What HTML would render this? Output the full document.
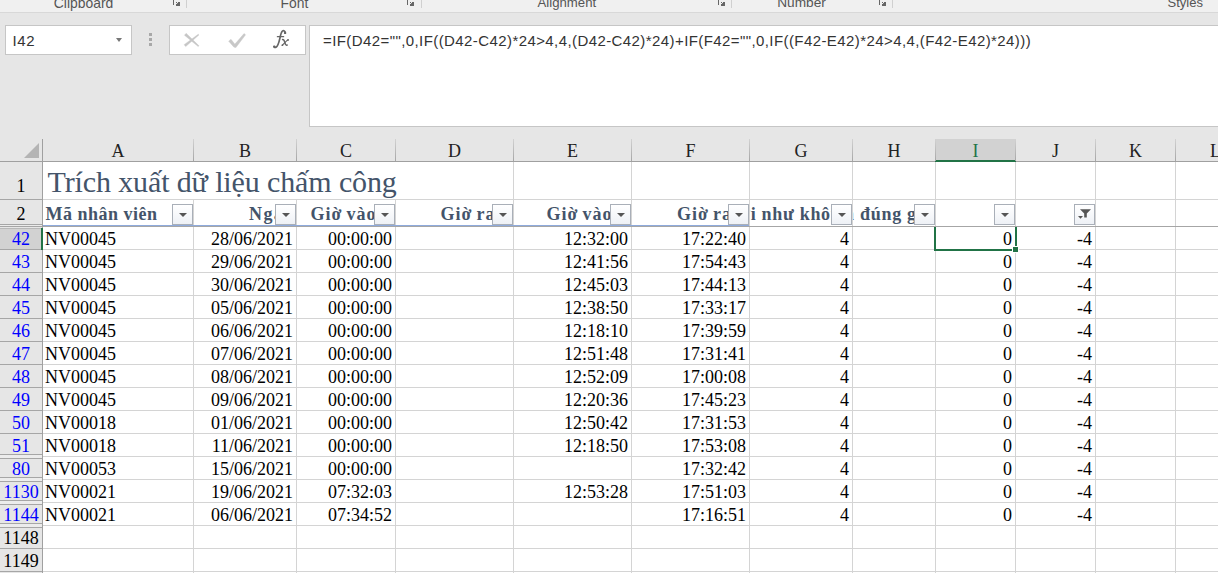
<!DOCTYPE html>
<html><head><meta charset="utf-8">
<style>
*{margin:0;padding:0;box-sizing:border-box}
html,body{width:1218px;height:573px;overflow:hidden;background:#e6e6e6}
.a{position:absolute}
.ui{font-family:"Liberation Sans",sans-serif}
.sr{font-family:"Liberation Serif",serif}
.t{position:absolute;white-space:nowrap;font-family:"Liberation Serif",serif;font-size:18px;line-height:22px;color:#000}
.r{text-align:right}
.clip{position:absolute;overflow:hidden;white-space:nowrap}
.btn{position:absolute;width:21px;height:21px;border:1px solid #a9afb8;background:linear-gradient(#ffffff,#eef1f6)}
.btn i{position:absolute;left:6px;top:8px;width:0;height:0;border-left:4px solid transparent;border-right:4px solid transparent;border-top:4px solid #555}
</style></head><body>

<div class="a" style="left:0;top:0;width:1218px;height:12px;background:#f0f0f0"></div>
<div class="a" style="left:0;top:12px;width:1218px;height:1px;background:#d8d8d8"></div>
<div class="a ui" style="left:53.8px;top:-7px;font-size:13.9px;line-height:20px;color:#555;white-space:nowrap">Clipboard</div>
<div class="a ui" style="left:280.5px;top:-7px;font-size:13.9px;line-height:20px;color:#555;white-space:nowrap">Font</div>
<div class="a ui" style="left:537.5px;top:-7px;font-size:13.2px;line-height:20px;color:#555;white-space:nowrap">Alignment</div>
<div class="a ui" style="left:777.2px;top:-7px;font-size:13.7px;line-height:20px;color:#555;white-space:nowrap">Number</div>
<div class="a ui" style="left:1167.5px;top:-7px;font-size:13.0px;line-height:20px;color:#555;white-space:nowrap">Styles</div>
<div class="a" style="left:173px;top:0;width:1px;height:5px;background:#666"></div>
<svg class="a" style="left:176px;top:2px" width="4" height="4" viewBox="0 0 4 4"><path d="M0 0H1V1H0Z M2 0H4V4H0V2H2Z" fill="#666"/><path d="M1 1H2V2H1Z" fill="#777"/></svg>
<div class="a" style="left:407px;top:0;width:1px;height:5px;background:#666"></div>
<svg class="a" style="left:410px;top:2px" width="4" height="4" viewBox="0 0 4 4"><path d="M0 0H1V1H0Z M2 0H4V4H0V2H2Z" fill="#666"/><path d="M1 1H2V2H1Z" fill="#777"/></svg>
<div class="a" style="left:718px;top:0;width:1px;height:5px;background:#666"></div>
<svg class="a" style="left:721px;top:2px" width="4" height="4" viewBox="0 0 4 4"><path d="M0 0H1V1H0Z M2 0H4V4H0V2H2Z" fill="#666"/><path d="M1 1H2V2H1Z" fill="#777"/></svg>
<div class="a" style="left:879px;top:0;width:1px;height:5px;background:#666"></div>
<svg class="a" style="left:882px;top:2px" width="4" height="4" viewBox="0 0 4 4"><path d="M0 0H1V1H0Z M2 0H4V4H0V2H2Z" fill="#666"/><path d="M1 1H2V2H1Z" fill="#777"/></svg>
<div class="a" style="left:186px;top:0;width:1px;height:8px;background:#d0d0d0"></div>
<div class="a" style="left:421px;top:0;width:1px;height:8px;background:#d0d0d0"></div>
<div class="a" style="left:731px;top:0;width:1px;height:8px;background:#d0d0d0"></div>
<div class="a" style="left:892px;top:0;width:1px;height:8px;background:#d0d0d0"></div>
<div class="a" style="left:5px;top:25px;width:127px;height:30px;background:#fff;border:1px solid #c6c6c6"></div>
<div class="a ui" style="left:12.5px;top:30.5px;font-size:15px;line-height:20px;letter-spacing:0.6px;color:#333">I42</div>
<div class="a" style="left:115.5px;top:38px;width:0;height:0;border-left:3.75px solid transparent;border-right:3.75px solid transparent;border-top:4px solid #777"></div>
<div class="a" style="left:149px;top:33px;width:3px;height:3px;background:#a8a8a8"></div>
<div class="a" style="left:149px;top:38px;width:3px;height:3px;background:#a8a8a8"></div>
<div class="a" style="left:149px;top:43px;width:3px;height:3px;background:#a8a8a8"></div>
<div class="a" style="left:169px;top:25px;width:137px;height:30px;background:#fff;border:1px solid #c6c6c6"></div>
<svg class="a" style="left:183px;top:32px" width="17" height="16" viewBox="0 0 17 16"><path d="M1.47 3.23 L15.23 14.61 L15.97 13.79 L3.13 1.37Z M2.68 14.57 L15.91 2.99 L15.29 2.21 L1.12 12.63Z" fill="#c6c6c6" stroke="#c6c6c6" stroke-width="0.4" stroke-linejoin="round"/></svg>
<svg class="a" style="left:226px;top:31px" width="22" height="18" viewBox="0 0 22 18"><path d="M2.65 10.17 L8.21 16.44 L10.19 14.76 L4.95 8.23Z M9.77 16.74 L19.58 3.83 L18.02 2.57 L7.43 14.86Z" fill="#c8c8c8" stroke="#c8c8c8" stroke-width="0.4" stroke-linejoin="round"/></svg>
<svg class="a" style="left:265px;top:26px" width="32" height="26" viewBox="0 0 32 26"><g fill="none" stroke="#666" stroke-linecap="round"><path d="M20.2 6.6C20.2 5 18.6 4.2 17.4 5.1C16.1 6.1 15.6 9 14.8 12.6C13.9 16.6 13 20.2 11 21.2C10 21.7 9.2 21.3 9.1 20.6" stroke-width="1.7"/><path d="M12.4 10.7H18.6" stroke-width="1.3"/><path d="M17.6 13.6C18.8 13.4 19.3 14.6 19.8 16.4C20.3 18.3 20.8 19.6 22.2 19" stroke-width="1.5"/><path d="M22.8 13.9C21.5 14.5 19 17.5 17.3 19.4" stroke-width="1.1"/></g><g fill="#666"><circle cx="20.1" cy="6.9" r="1.2"/><circle cx="9.3" cy="20.6" r="1.2"/><circle cx="23.1" cy="13.9" r="0.9"/><circle cx="17.4" cy="19.2" r="0.9"/></g></svg>
<div class="a" style="left:309px;top:25px;width:920px;height:102px;background:#fff;border:1px solid #c6c6c6"></div>
<div class="a ui" style="left:323px;top:31px;font-size:15px;line-height:20px;letter-spacing:0.415px;color:#333;white-space:nowrap">=IF(D42=&quot;&quot;,0,IF((D42-C42)*24&gt;4,4,(D42-C42)*24)+IF(F42=&quot;&quot;,0,IF((F42-E42)*24&gt;4,4,(F42-E42)*24)))</div>
<div class="a" style="left:43px;top:162px;width:1175px;height:411px;background:#fff"></div>
<div class="a" style="left:935px;top:139px;width:81px;height:21px;background:#d2d2d2"></div>
<div class="a" style="left:935px;top:160px;width:81px;height:2px;background:#217346"></div>
<div class="a" style="left:0;top:161px;width:935px;height:1px;background:#a0a0a0"></div>
<div class="a" style="left:1016px;top:161px;width:202px;height:1px;background:#a0a0a0"></div>
<div class="a" style="left:42px;top:139px;width:1px;height:434px;background:#a0a0a0"></div>
<svg class="a" style="left:24px;top:143px" width="16" height="16" viewBox="0 0 16 16"><path d="M15 0V15H0Z" fill="#b4b4b4"/></svg>
<div class="t" style="left:43px;top:140px;width:150px;text-align:center;color:#222">A</div>
<div class="t" style="left:194px;top:140px;width:102px;text-align:center;color:#222">B</div>
<div class="t" style="left:297px;top:140px;width:98px;text-align:center;color:#222">C</div>
<div class="t" style="left:396px;top:140px;width:117px;text-align:center;color:#222">D</div>
<div class="t" style="left:514px;top:140px;width:117px;text-align:center;color:#222">E</div>
<div class="t" style="left:632px;top:140px;width:117px;text-align:center;color:#222">F</div>
<div class="t" style="left:750px;top:140px;width:102px;text-align:center;color:#222">G</div>
<div class="t" style="left:853px;top:140px;width:82px;text-align:center;color:#222">H</div>
<div class="t" style="left:936px;top:140px;width:79px;text-align:center;color:#217346">I</div>
<div class="t" style="left:1016px;top:140px;width:79px;text-align:center;color:#222">J</div>
<div class="t" style="left:1096px;top:140px;width:79px;text-align:center;color:#222">K</div>
<div class="t" style="left:1176px;top:140px;width:79px;text-align:center;color:#222">L</div>
<div class="a" style="left:193px;top:139px;width:1px;height:22px;background:linear-gradient(#d2d2d2,#a6a6a6)"></div>
<div class="a" style="left:296px;top:139px;width:1px;height:22px;background:linear-gradient(#d2d2d2,#a6a6a6)"></div>
<div class="a" style="left:395px;top:139px;width:1px;height:22px;background:linear-gradient(#d2d2d2,#a6a6a6)"></div>
<div class="a" style="left:513px;top:139px;width:1px;height:22px;background:linear-gradient(#d2d2d2,#a6a6a6)"></div>
<div class="a" style="left:631px;top:139px;width:1px;height:22px;background:linear-gradient(#d2d2d2,#a6a6a6)"></div>
<div class="a" style="left:749px;top:139px;width:1px;height:22px;background:linear-gradient(#d2d2d2,#a6a6a6)"></div>
<div class="a" style="left:852px;top:139px;width:1px;height:22px;background:linear-gradient(#d2d2d2,#a6a6a6)"></div>
<div class="a" style="left:935px;top:139px;width:1px;height:22px;background:linear-gradient(#d2d2d2,#a6a6a6)"></div>
<div class="a" style="left:1015px;top:139px;width:1px;height:22px;background:linear-gradient(#d2d2d2,#a6a6a6)"></div>
<div class="a" style="left:1095px;top:139px;width:1px;height:22px;background:linear-gradient(#d2d2d2,#a6a6a6)"></div>
<div class="a" style="left:1175px;top:139px;width:1px;height:22px;background:linear-gradient(#d2d2d2,#a6a6a6)"></div>
<div class="a" style="left:193px;top:162px;width:1px;height:411px;background:#d4d4d4"></div>
<div class="a" style="left:296px;top:162px;width:1px;height:411px;background:#d4d4d4"></div>
<div class="a" style="left:395px;top:162px;width:1px;height:411px;background:#d4d4d4"></div>
<div class="a" style="left:513px;top:162px;width:1px;height:411px;background:#d4d4d4"></div>
<div class="a" style="left:631px;top:162px;width:1px;height:411px;background:#d4d4d4"></div>
<div class="a" style="left:749px;top:162px;width:1px;height:411px;background:#d4d4d4"></div>
<div class="a" style="left:852px;top:162px;width:1px;height:411px;background:#d4d4d4"></div>
<div class="a" style="left:935px;top:162px;width:1px;height:411px;background:#d4d4d4"></div>
<div class="a" style="left:1015px;top:162px;width:1px;height:411px;background:#d4d4d4"></div>
<div class="a" style="left:1095px;top:162px;width:1px;height:411px;background:#d4d4d4"></div>
<div class="a" style="left:1175px;top:162px;width:1px;height:411px;background:#d4d4d4"></div>
<div class="a" style="left:43px;top:199px;width:1175px;height:1px;background:#d4d4d4"></div>
<div class="a" style="left:43px;top:249px;width:1175px;height:1px;background:#d4d4d4"></div>
<div class="a" style="left:43px;top:272px;width:1175px;height:1px;background:#d4d4d4"></div>
<div class="a" style="left:43px;top:295px;width:1175px;height:1px;background:#d4d4d4"></div>
<div class="a" style="left:43px;top:318px;width:1175px;height:1px;background:#d4d4d4"></div>
<div class="a" style="left:43px;top:341px;width:1175px;height:1px;background:#d4d4d4"></div>
<div class="a" style="left:43px;top:364px;width:1175px;height:1px;background:#d4d4d4"></div>
<div class="a" style="left:43px;top:387px;width:1175px;height:1px;background:#d4d4d4"></div>
<div class="a" style="left:43px;top:410px;width:1175px;height:1px;background:#d4d4d4"></div>
<div class="a" style="left:43px;top:433px;width:1175px;height:1px;background:#d4d4d4"></div>
<div class="a" style="left:43px;top:456px;width:1175px;height:1px;background:#d4d4d4"></div>
<div class="a" style="left:43px;top:479px;width:1175px;height:1px;background:#d4d4d4"></div>
<div class="a" style="left:43px;top:502px;width:1175px;height:1px;background:#d4d4d4"></div>
<div class="a" style="left:43px;top:525px;width:1175px;height:1px;background:#d4d4d4"></div>
<div class="a" style="left:43px;top:548px;width:1175px;height:1px;background:#d4d4d4"></div>
<div class="a" style="left:43px;top:571px;width:1175px;height:1px;background:#d4d4d4"></div>
<div class="a" style="left:43px;top:162px;width:470px;height:37px;background:#fff"></div>
<div class="t" style="transform:none;left:47.5px;top:166.5px;font-size:30px;line-height:30px;letter-spacing:-0.12px;color:#44546a">Trích xuất dữ liệu chấm công</div>
<div class="a" style="left:43px;top:225px;width:706px;height:1px;background:#8eaadc"></div>
<div class="a" style="left:43px;top:226px;width:1175px;height:1px;background:#a6a6a6"></div>
<div class="clip" style="left:43px;top:200px;width:129px;height:24px"><div class="t" style="left:2.5px;top:3px;font-weight:700;letter-spacing:0.5px;word-spacing:0px;color:#44546a">Mã nhân viên</div></div>
<div class="clip" style="left:194px;top:200px;width:81px;height:24px"><div class="t" style="left:55px;top:3px;font-weight:700;letter-spacing:1.4px;word-spacing:0px;color:#44546a">Ngày</div></div>
<div class="clip" style="left:297px;top:200px;width:77px;height:24px"><div class="t" style="left:13.5px;top:3px;font-weight:700;letter-spacing:1.0px;word-spacing:-1.5px;color:#44546a">Giờ vào</div></div>
<div class="clip" style="left:396px;top:200px;width:96px;height:24px"><div class="t" style="left:44.5px;top:3px;font-weight:700;letter-spacing:1.0px;word-spacing:-1.5px;color:#44546a">Giờ ra</div></div>
<div class="clip" style="left:514px;top:200px;width:96px;height:24px"><div class="t" style="left:32.5px;top:3px;font-weight:700;letter-spacing:1.0px;word-spacing:-1.5px;color:#44546a">Giờ vào</div></div>
<div class="clip" style="left:632px;top:200px;width:96px;height:24px"><div class="t" style="left:45px;top:3px;font-weight:700;letter-spacing:1.0px;word-spacing:-1.5px;color:#44546a">Giờ ra</div></div>
<div class="clip" style="left:750px;top:200px;width:81px;height:24px"><div class="t" style="left:-10px;top:3px;font-weight:700;letter-spacing:0.7px;word-spacing:0px;color:#44546a">ời như không</div></div>
<div class="clip" style="left:853px;top:200px;width:61px;height:24px"><div class="t" style="left:-8px;top:3px;font-weight:700;letter-spacing:0.7px;word-spacing:0px;color:#44546a">a</div></div>
<div class="clip" style="left:853px;top:200px;width:61px;height:24px"><div class="t" style="left:7px;top:3px;font-weight:700;letter-spacing:0.7px;word-spacing:0px;color:#44546a">đúng giờ</div></div>
<div class="btn" style="left:172px;top:204px"><i></i></div>
<div class="btn" style="left:275px;top:204px"><i></i></div>
<div class="btn" style="left:374px;top:204px"><i></i></div>
<div class="btn" style="left:492px;top:204px"><i></i></div>
<div class="btn" style="left:610px;top:204px"><i></i></div>
<div class="btn" style="left:728px;top:204px"><i></i></div>
<div class="btn" style="left:831px;top:204px"><i></i></div>
<div class="btn" style="left:914px;top:204px"><i></i></div>
<div class="btn" style="left:994px;top:204px"><i></i></div>
<div class="btn" style="left:1074px;top:204px"><svg class="a" style="left:3px;top:4px" width="14" height="12" viewBox="0 0 14 12"><path d="M2 0.3H13L8.8 4.5V8.6H6.2V4.5Z" fill="#555"/><path d="M0 7H5L2.5 9.8Z" fill="#555"/></svg></div>
<div class="t" style="left:0;top:175px;width:42px;text-align:center">1</div>
<div class="a" style="left:0;top:199px;width:42px;height:1px;background:#a6a6a6"></div>
<div class="t" style="left:0;top:203px;width:42px;text-align:center">2</div>
<div class="a" style="left:0;top:225px;width:42px;height:1px;background:#ececec"></div>
<div class="a" style="left:0;top:224px;width:42px;height:1px;background:#a6a6a6"></div>
<div class="a" style="left:0;top:226px;width:42px;height:1px;background:#a6a6a6"></div>
<div class="a" style="left:0;top:228px;width:42px;height:21px;background:#d2d2d2"></div>
<div class="a" style="left:0;top:228px;width:42px;height:1px;background:#b8b8b8"></div>
<div class="t" style="left:0;top:228px;width:42px;text-align:center;color:#0000ff">42</div>
<div class="a" style="left:0;top:249px;width:42px;height:1px;background:#a6a6a6"></div>
<div class="t" style="left:45px;top:228px">NV00045</div>
<div class="t r" style="left:193px;top:228px;width:100px">28/06/2021</div>
<div class="t r" style="left:296px;top:228px;width:96px">00:00:00</div>
<div class="t r" style="left:513px;top:228px;width:115px">12:32:00</div>
<div class="t r" style="left:631px;top:228px;width:115px">17:22:40</div>
<div class="t r" style="left:749px;top:228px;width:100px">4</div>
<div class="t r" style="left:935px;top:228px;width:77px">0</div>
<div class="t r" style="left:1015px;top:228px;width:77px">-4</div>
<div class="t" style="left:0;top:251px;width:42px;text-align:center;color:#0000ff">43</div>
<div class="a" style="left:0;top:272px;width:42px;height:1px;background:#a6a6a6"></div>
<div class="t" style="left:45px;top:251px">NV00045</div>
<div class="t r" style="left:193px;top:251px;width:100px">29/06/2021</div>
<div class="t r" style="left:296px;top:251px;width:96px">00:00:00</div>
<div class="t r" style="left:513px;top:251px;width:115px">12:41:56</div>
<div class="t r" style="left:631px;top:251px;width:115px">17:54:43</div>
<div class="t r" style="left:749px;top:251px;width:100px">4</div>
<div class="t r" style="left:935px;top:251px;width:77px">0</div>
<div class="t r" style="left:1015px;top:251px;width:77px">-4</div>
<div class="t" style="left:0;top:274px;width:42px;text-align:center;color:#0000ff">44</div>
<div class="a" style="left:0;top:295px;width:42px;height:1px;background:#a6a6a6"></div>
<div class="t" style="left:45px;top:274px">NV00045</div>
<div class="t r" style="left:193px;top:274px;width:100px">30/06/2021</div>
<div class="t r" style="left:296px;top:274px;width:96px">00:00:00</div>
<div class="t r" style="left:513px;top:274px;width:115px">12:45:03</div>
<div class="t r" style="left:631px;top:274px;width:115px">17:44:13</div>
<div class="t r" style="left:749px;top:274px;width:100px">4</div>
<div class="t r" style="left:935px;top:274px;width:77px">0</div>
<div class="t r" style="left:1015px;top:274px;width:77px">-4</div>
<div class="t" style="left:0;top:297px;width:42px;text-align:center;color:#0000ff">45</div>
<div class="a" style="left:0;top:318px;width:42px;height:1px;background:#a6a6a6"></div>
<div class="t" style="left:45px;top:297px">NV00045</div>
<div class="t r" style="left:193px;top:297px;width:100px">05/06/2021</div>
<div class="t r" style="left:296px;top:297px;width:96px">00:00:00</div>
<div class="t r" style="left:513px;top:297px;width:115px">12:38:50</div>
<div class="t r" style="left:631px;top:297px;width:115px">17:33:17</div>
<div class="t r" style="left:749px;top:297px;width:100px">4</div>
<div class="t r" style="left:935px;top:297px;width:77px">0</div>
<div class="t r" style="left:1015px;top:297px;width:77px">-4</div>
<div class="t" style="left:0;top:320px;width:42px;text-align:center;color:#0000ff">46</div>
<div class="a" style="left:0;top:341px;width:42px;height:1px;background:#a6a6a6"></div>
<div class="t" style="left:45px;top:320px">NV00045</div>
<div class="t r" style="left:193px;top:320px;width:100px">06/06/2021</div>
<div class="t r" style="left:296px;top:320px;width:96px">00:00:00</div>
<div class="t r" style="left:513px;top:320px;width:115px">12:18:10</div>
<div class="t r" style="left:631px;top:320px;width:115px">17:39:59</div>
<div class="t r" style="left:749px;top:320px;width:100px">4</div>
<div class="t r" style="left:935px;top:320px;width:77px">0</div>
<div class="t r" style="left:1015px;top:320px;width:77px">-4</div>
<div class="t" style="left:0;top:343px;width:42px;text-align:center;color:#0000ff">47</div>
<div class="a" style="left:0;top:364px;width:42px;height:1px;background:#a6a6a6"></div>
<div class="t" style="left:45px;top:343px">NV00045</div>
<div class="t r" style="left:193px;top:343px;width:100px">07/06/2021</div>
<div class="t r" style="left:296px;top:343px;width:96px">00:00:00</div>
<div class="t r" style="left:513px;top:343px;width:115px">12:51:48</div>
<div class="t r" style="left:631px;top:343px;width:115px">17:31:41</div>
<div class="t r" style="left:749px;top:343px;width:100px">4</div>
<div class="t r" style="left:935px;top:343px;width:77px">0</div>
<div class="t r" style="left:1015px;top:343px;width:77px">-4</div>
<div class="t" style="left:0;top:366px;width:42px;text-align:center;color:#0000ff">48</div>
<div class="a" style="left:0;top:387px;width:42px;height:1px;background:#a6a6a6"></div>
<div class="t" style="left:45px;top:366px">NV00045</div>
<div class="t r" style="left:193px;top:366px;width:100px">08/06/2021</div>
<div class="t r" style="left:296px;top:366px;width:96px">00:00:00</div>
<div class="t r" style="left:513px;top:366px;width:115px">12:52:09</div>
<div class="t r" style="left:631px;top:366px;width:115px">17:00:08</div>
<div class="t r" style="left:749px;top:366px;width:100px">4</div>
<div class="t r" style="left:935px;top:366px;width:77px">0</div>
<div class="t r" style="left:1015px;top:366px;width:77px">-4</div>
<div class="t" style="left:0;top:389px;width:42px;text-align:center;color:#0000ff">49</div>
<div class="a" style="left:0;top:410px;width:42px;height:1px;background:#a6a6a6"></div>
<div class="t" style="left:45px;top:389px">NV00045</div>
<div class="t r" style="left:193px;top:389px;width:100px">09/06/2021</div>
<div class="t r" style="left:296px;top:389px;width:96px">00:00:00</div>
<div class="t r" style="left:513px;top:389px;width:115px">12:20:36</div>
<div class="t r" style="left:631px;top:389px;width:115px">17:45:23</div>
<div class="t r" style="left:749px;top:389px;width:100px">4</div>
<div class="t r" style="left:935px;top:389px;width:77px">0</div>
<div class="t r" style="left:1015px;top:389px;width:77px">-4</div>
<div class="t" style="left:0;top:412px;width:42px;text-align:center;color:#0000ff">50</div>
<div class="a" style="left:0;top:433px;width:42px;height:1px;background:#a6a6a6"></div>
<div class="t" style="left:45px;top:412px">NV00018</div>
<div class="t r" style="left:193px;top:412px;width:100px">01/06/2021</div>
<div class="t r" style="left:296px;top:412px;width:96px">00:00:00</div>
<div class="t r" style="left:513px;top:412px;width:115px">12:50:42</div>
<div class="t r" style="left:631px;top:412px;width:115px">17:31:53</div>
<div class="t r" style="left:749px;top:412px;width:100px">4</div>
<div class="t r" style="left:935px;top:412px;width:77px">0</div>
<div class="t r" style="left:1015px;top:412px;width:77px">-4</div>
<div class="t" style="left:0;top:435px;width:42px;text-align:center;color:#0000ff">51</div>
<div class="a" style="left:0;top:455px;width:42px;height:3px;background:#ececec"></div>
<div class="a" style="left:0;top:454px;width:42px;height:1px;background:#a6a6a6"></div>
<div class="a" style="left:0;top:458px;width:42px;height:1px;background:#a6a6a6"></div>
<div class="t" style="left:45px;top:435px">NV00018</div>
<div class="t r" style="left:193px;top:435px;width:100px">11/06/2021</div>
<div class="t r" style="left:296px;top:435px;width:96px">00:00:00</div>
<div class="t r" style="left:513px;top:435px;width:115px">12:18:50</div>
<div class="t r" style="left:631px;top:435px;width:115px">17:53:08</div>
<div class="t r" style="left:749px;top:435px;width:100px">4</div>
<div class="t r" style="left:935px;top:435px;width:77px">0</div>
<div class="t r" style="left:1015px;top:435px;width:77px">-4</div>
<div class="t" style="left:0;top:458px;width:42px;text-align:center;color:#0000ff">80</div>
<div class="a" style="left:0;top:478px;width:42px;height:3px;background:#ececec"></div>
<div class="a" style="left:0;top:477px;width:42px;height:1px;background:#a6a6a6"></div>
<div class="a" style="left:0;top:481px;width:42px;height:1px;background:#a6a6a6"></div>
<div class="t" style="left:45px;top:458px">NV00053</div>
<div class="t r" style="left:193px;top:458px;width:100px">15/06/2021</div>
<div class="t r" style="left:296px;top:458px;width:96px">00:00:00</div>
<div class="t r" style="left:631px;top:458px;width:115px">17:32:42</div>
<div class="t r" style="left:749px;top:458px;width:100px">4</div>
<div class="t r" style="left:935px;top:458px;width:77px">0</div>
<div class="t r" style="left:1015px;top:458px;width:77px">-4</div>
<div class="t" style="left:0;top:481px;width:42px;text-align:center;color:#0000ff">1130</div>
<div class="a" style="left:0;top:501px;width:42px;height:3px;background:#ececec"></div>
<div class="a" style="left:0;top:500px;width:42px;height:1px;background:#a6a6a6"></div>
<div class="a" style="left:0;top:504px;width:42px;height:1px;background:#a6a6a6"></div>
<div class="t" style="left:45px;top:481px">NV00021</div>
<div class="t r" style="left:193px;top:481px;width:100px">19/06/2021</div>
<div class="t r" style="left:296px;top:481px;width:96px">07:32:03</div>
<div class="t r" style="left:513px;top:481px;width:115px">12:53:28</div>
<div class="t r" style="left:631px;top:481px;width:115px">17:51:03</div>
<div class="t r" style="left:749px;top:481px;width:100px">4</div>
<div class="t r" style="left:935px;top:481px;width:77px">0</div>
<div class="t r" style="left:1015px;top:481px;width:77px">-4</div>
<div class="t" style="left:0;top:504px;width:42px;text-align:center;color:#0000ff">1144</div>
<div class="a" style="left:0;top:524px;width:42px;height:3px;background:#ececec"></div>
<div class="a" style="left:0;top:523px;width:42px;height:1px;background:#a6a6a6"></div>
<div class="a" style="left:0;top:527px;width:42px;height:1px;background:#a6a6a6"></div>
<div class="t" style="left:45px;top:504px">NV00021</div>
<div class="t r" style="left:193px;top:504px;width:100px">06/06/2021</div>
<div class="t r" style="left:296px;top:504px;width:96px">07:34:52</div>
<div class="t r" style="left:631px;top:504px;width:115px">17:16:51</div>
<div class="t r" style="left:749px;top:504px;width:100px">4</div>
<div class="t r" style="left:935px;top:504px;width:77px">0</div>
<div class="t r" style="left:1015px;top:504px;width:77px">-4</div>
<div class="t" style="left:0;top:527px;width:42px;text-align:center;color:#000">1148</div>
<div class="a" style="left:0;top:548px;width:42px;height:1px;background:#a6a6a6"></div>
<div class="t" style="left:0;top:550px;width:42px;text-align:center;color:#000">1149</div>
<div class="a" style="left:0;top:571px;width:42px;height:1px;background:#a6a6a6"></div>
<div class="a" style="left:41px;top:228px;width:2px;height:22px;background:#217346"></div>
<div class="a" style="left:934px;top:227px;width:2px;height:24px;background:#217346"></div>
<div class="a" style="left:934px;top:249px;width:78px;height:2px;background:#217346"></div>
<div class="a" style="left:1015px;top:227px;width:2px;height:19px;background:#217346"></div>
<div class="a" style="left:1012px;top:246px;width:7px;height:7px;background:#fff"></div>
<div class="a" style="left:1013px;top:247px;width:5px;height:5px;background:#217346"></div>
</body></html>
